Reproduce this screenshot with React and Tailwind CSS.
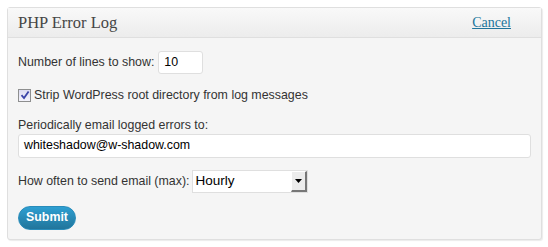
import React from "react";

const App = () => {
  return (
    <div className="w-[548px] h-[247px] bg-white p-[7px] pr-[6px] pb-[7px] font-['Liberation_Sans',Arial,sans-serif] text-[12.4px] text-[#333]">
      <div className="h-[233px] border border-[#dfdfdf] rounded-[3px] bg-[#f5f5f5] shadow-[1px_1px_1px_rgba(0,0,0,0.08)]">
        <div className="flex items-center justify-between h-[30px] px-[10px] border-b border-[#dfdfdf] bg-gradient-to-b from-[#f9f9f9] to-[#ececec]">
          <span className="font-['Liberation_Serif',Georgia,serif] text-[16.5px] text-[#464646] leading-none mt-[1px]">
            PHP Error Log
          </span>
          <a
            href="#"
            className="mr-[20px] font-['Liberation_Serif',Georgia,serif] text-[14px] text-[#21759b] underline leading-none"
          >
            Cancel
          </a>
        </div>

        <div className="px-[10px] pt-[13px]">
          <div className="flex items-center gap-[4px]">
            <span>Number of lines to show:</span>
            <div className="w-[45px] h-[23px] bg-white border border-[#dfdfdf] rounded-[3px] px-[5px] flex items-center text-black">
              10
            </div>
          </div>

          <div className="flex items-center mt-[12px] gap-[3px]">
            <span className="w-[13px] h-[13px] border border-[#8e8f8f] bg-gradient-to-b from-[#dcdcf2] to-[#f4f4fb] flex items-center justify-center">
              <svg width="10" height="10" viewBox="0 0 10 10">
                <path d="M1.5 5.2 L4 8 L8.6 1.4" stroke="#3a44a8" strokeWidth="1.8" fill="none" />
              </svg>
            </span>
            <span>Strip WordPress root directory from log messages</span>
          </div>

          <div className="mt-[13px] leading-[15px]">Periodically email logged errors to:</div>
          <div className="mt-[1px] h-[24px] w-[513px] bg-white border border-[#dfdfdf] rounded-[3px] px-[5px] flex items-center text-black">
            whiteshadow@w-shadow.com
          </div>

          <div className="flex items-center mt-[12px] gap-[3px]">
            <span>How often to send email (max):</span>
            <div className="w-[116px] h-[23px] bg-white border border-[#dfdfdf] flex items-stretch">
              <span className="flex-1 flex items-center px-[2px] text-black text-[13.5px]">Hourly</span>
              <span className="w-[16px] bg-[#ececec] border-l border-t border-white border-r-2 border-b-2 border-r-[#777] border-b-[#777] flex items-center justify-center">
                <svg width="7" height="4" viewBox="0 0 7 4">
                  <path d="M0 0 H7 L3.5 4 Z" fill="#000" />
                </svg>
              </span>
            </div>
          </div>

          <button className="mt-[13px] h-[24px] px-[7px] rounded-full bg-gradient-to-b from-[#2e9fd2] to-[#21759b] border border-[#298cba] text-white font-bold text-[12.4px] leading-none">
            Submit
          </button>
        </div>
      </div>
    </div>
  );
};

export default App;
